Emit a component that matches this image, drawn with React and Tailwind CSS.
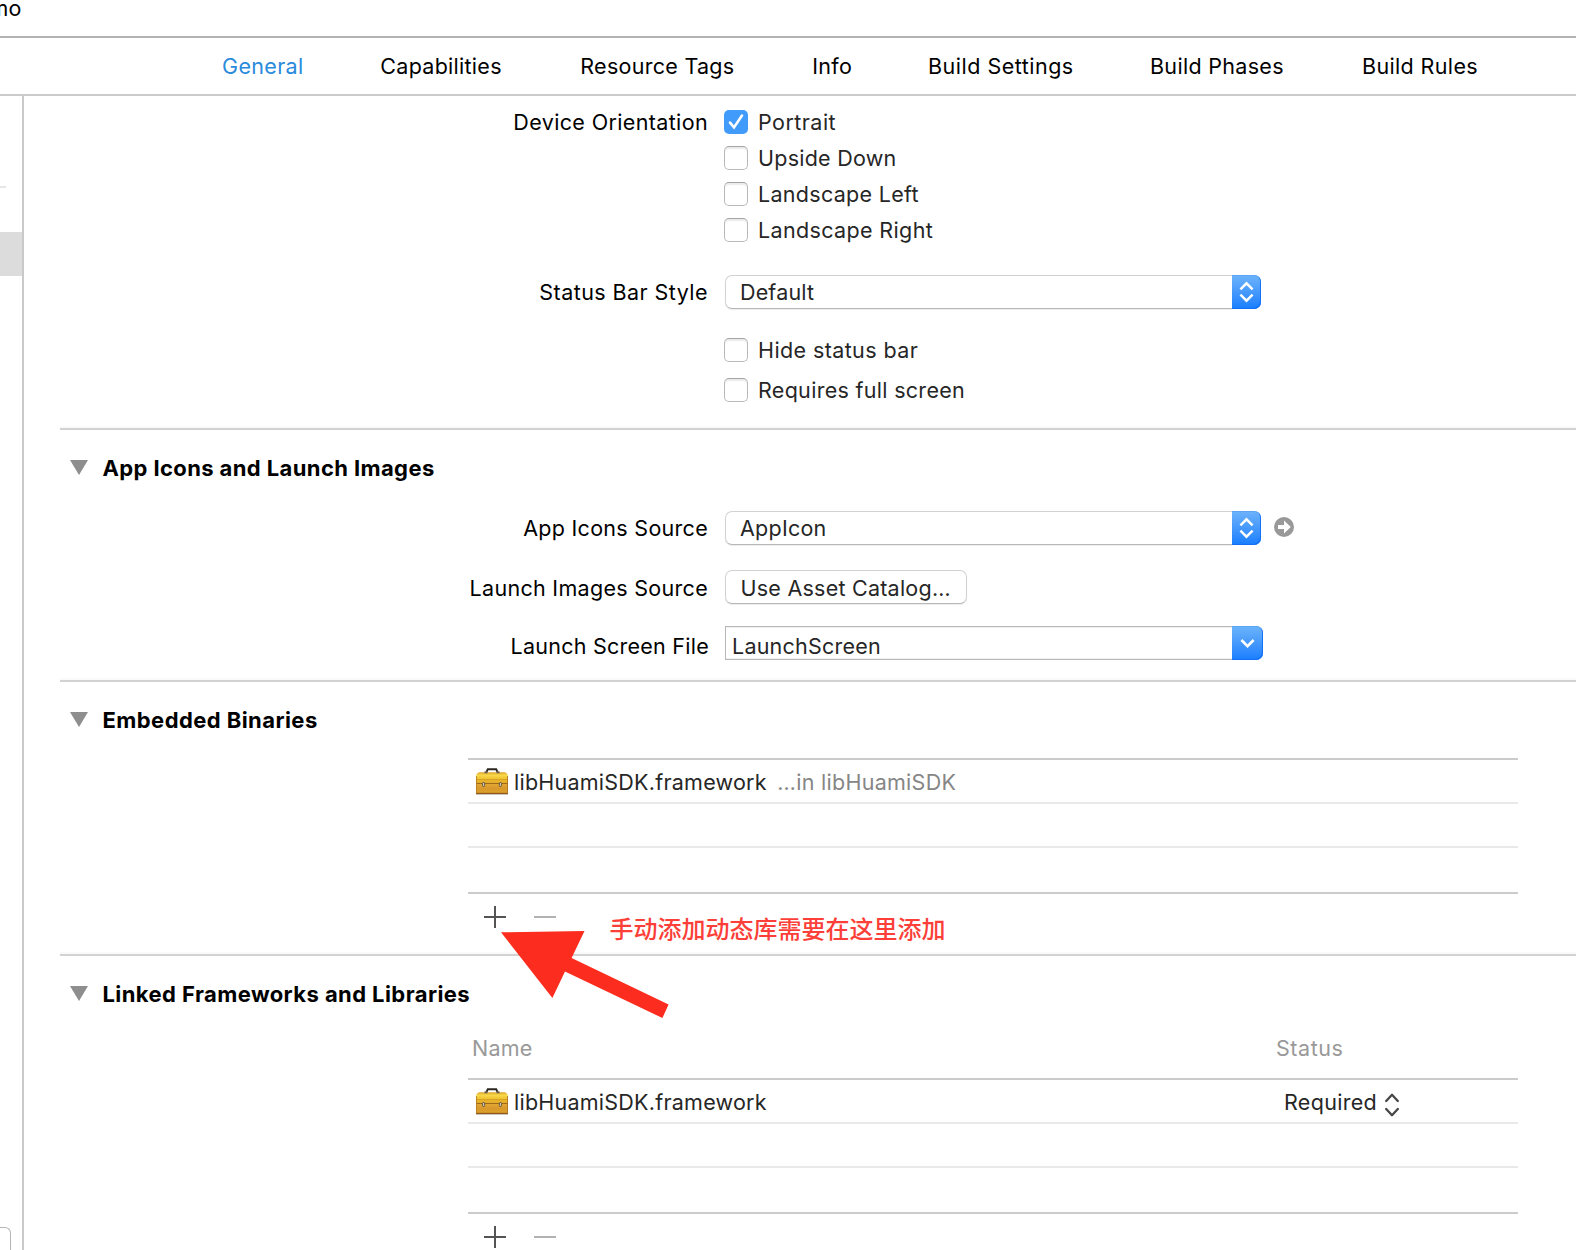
import React from "react";

const TABS = [
  ["General", "tracking-[0.34px] text-[#2a8bdc]"],
  ["Capabilities", "tracking-[0.28px]"],
  ["Resource Tags", "tracking-[0.28px]"],
  ["Info", "tracking-[0.3px]"],
  ["Build Settings", "tracking-[0.5px]"],
  ["Build Phases", "tracking-[0.31px]"],
  ["Build Rules", "tracking-[0.36px]"],
];

function Row({ label, labelClass = "", className = "", children }) {
  return (
    <div className={`flex items-center ${className}`}>
      <div className={`w-[648px] shrink-0 text-right ${labelClass}`}>{label}</div>
      {children}
    </div>
  );
}

function Checkbox({ checked, label, className = "" }) {
  return (
    <label className="ml-4 flex items-center text-[#262626]">
      {checked ? (
        <span className="flex size-6 items-center justify-center rounded-[5px] bg-[#409bfa]">
          <svg width="24" height="24" viewBox="0 0 24 24" fill="none" stroke="#fff" strokeWidth="2.6">
            <path d="M6 12.6 L10 17.4 L18 5.6" strokeLinecap="round" />
          </svg>
        </span>
      ) : (
        <span className="size-6 rounded-[5px] border border-[#b9b9b9] border-t-[#a3a3a3] bg-white shadow-[inset_0_2px_1px_#ececec]" />
      )}
      <span className={`ml-[10px] ${className}`}>{label}</span>
    </label>
  );
}

function Chevrons() {
  return (
    <svg width="29" height="34" viewBox="0 0 29 34" fill="none" stroke="#fff" strokeWidth="2.4">
      <path d="M8.4 14.4 L14.5 8.3 L20.6 14.4" />
      <path d="M8.4 19.6 L14.5 25.7 L20.6 19.6" />
    </svg>
  );
}

function Popup({ value, className = "" }) {
  return (
    <div className="ml-[17px] flex h-[34px] w-[536px] text-[#262626]">
      <div className="flex flex-1 items-center rounded-l-[7px] border border-r-0 border-[#d2d2d2] border-b-[#b8b8b8] bg-white pl-[14px] shadow-[0_1px_1px_#ececec]">
        <span className={className}>{value}</span>
      </div>
      <div className="w-[29px] rounded-r-[7px] bg-linear-to-b from-[#6cb3fa] to-[#157dfe] shadow-[inset_-1px_-1px_0_#1470f4,inset_0_1px_0_#5aa5f3]">
        <Chevrons />
      </div>
    </div>
  );
}

function Heading({ children, className }) {
  return (
    <div className="flex h-[26px] pl-[10px]">
      <svg width="18" height="15" viewBox="0 0 18 15" className="mt-[5px] mr-[14.5px]">
        <path d="M0 0 H18 L9 15 Z" fill="#8e8e8e" />
      </svg>
      <h2 className={`text-[22px] font-bold ${className}`}>{children}</h2>
    </div>
  );
}

function Toolbox() {
  return (
    <svg width="32" height="27" viewBox="0 0 32 27">
      <defs>
        <linearGradient id="lid" x1="0" y1="0" x2="0" y2="1">
          <stop offset="0" stopColor="#dca326" />
          <stop offset="0.25" stopColor="#f8d84a" />
          <stop offset="0.6" stopColor="#efc02c" />
          <stop offset="1" stopColor="#dfa42a" />
        </linearGradient>
        <linearGradient id="body" x1="0" y1="0" x2="0" y2="1">
          <stop offset="0" stopColor="#e2a834" />
          <stop offset="0.5" stopColor="#d8982b" />
          <stop offset="1" stopColor="#dea62c" />
        </linearGradient>
      </defs>
      <path d="M10.5 4 L11.8 1.2 H20.2 L21.5 4" fill="none" stroke="#2b2620" strokeWidth="1.9" />
      <path d="M0 16 V9 Q0 4.3 4.5 4.3 H27.5 Q32 4.3 32 9 V16 Z" fill="url(#lid)" />
      <rect x="8.5" y="3.3" width="3" height="2" fill="#6b6252" />
      <rect x="20.5" y="3.3" width="3" height="2" fill="#6b6252" />
      <rect x="0" y="15.6" width="32" height="10.2" fill="url(#body)" />
      <rect x="0" y="11.2" width="32" height="1" fill="#d49a26" />
      <rect x="0" y="15" width="32" height="1" fill="#9c6a1b" />
      <rect x="0" y="24.8" width="32" height="1.2" fill="#94591a" />
      <rect x="0" y="26" width="32" height="1" fill="#c9c5be" />
      <rect x="0" y="8" width="0.8" height="17.5" fill="#b67a1e" />
      <rect x="31.2" y="8" width="0.8" height="17.5" fill="#a8701c" />
      <rect x="6.6" y="14.4" width="2" height="4.2" rx="1" fill="#d5d5d0" stroke="#4a3f2c" strokeWidth="0.8" />
      <rect x="23.4" y="14.4" width="2" height="4.2" rx="1" fill="#d5d5d0" stroke="#4a3f2c" strokeWidth="0.8" />
    </svg>
  );
}

function FileTable({ origin, status }) {
  return (
    <div className="ml-[408px] w-[1050px] border-y-2 border-[#cbcbcb] text-[#262626]">
      <div className="flex h-11 border-b-2 border-[#e9e9e9] pt-2 pl-2">
        <Toolbox />
        <span className="mt-[1px] ml-[6px] tracking-[0.24px]">libHuamiSDK.framework</span>
        {origin && <span className="mt-[1px] ml-[10.5px] tracking-[0.28px] text-[#868686]">{origin}</span>}
        {status && (
          <span className="mt-[1px] mr-[119px] ml-auto flex">
            <span className="tracking-[0.3px]">{status}</span>
            <svg width="14" height="24" viewBox="0 0 14 24" fill="none" stroke="#474747" strokeWidth="2.3" strokeLinecap="round" strokeLinejoin="round" className="mt-1 ml-2">
              <path d="M1.2 8 L7 1.8 L12.8 8" />
              <path d="M1.2 16 L7 22.2 L12.8 16" />
            </svg>
          </span>
        )}
      </div>
      <div className="h-11 border-b-2 border-[#e9e9e9]" />
      <div className="h-11" />
    </div>
  );
}

function AddRemove() {
  return (
    <>
      <svg width="22" height="22" viewBox="0 0 22 22" className="mt-3 shrink-0">
        <path d="M0 11 H22 M11 0 V22" stroke="#545454" strokeWidth="2" />
      </svg>
      <svg width="22" height="22" viewBox="0 0 22 22" className="mt-3 ml-7 shrink-0">
        <path d="M0 11 H22" stroke="#b2b2b2" strokeWidth="2" />
      </svg>
    </>
  );
}

const SECTION = "border-b-2 border-[#d2d2d2] shadow-[inset_0_-2px_0_#fafafa]";

export default function App() {
  return (
    <div className="flex h-[1250px] w-[1576px] flex-col overflow-hidden bg-white font-[Inter,'Noto_Sans_CJK_SC',sans-serif] text-[21.5px] leading-[26px] whitespace-nowrap text-black">
      <header className="flex h-[38px] shrink-0 border-b-2 border-[#b3b3b3]">
        <span className="-mt-[5px] -ml-[10.5px] tracking-[0.2px]">mo</span>
      </header>
      <nav className="grid h-[58px] shrink-0 grid-cols-[158.3px_200px_232px_115.7px_222px_212px_auto] border-b-2 border-[#cbcbcb] pt-[15px] pl-[222px]">
        {TABS.map(([name, cls]) => (
          <span key={name} className={cls}>{name}</span>
        ))}
      </nav>
      <div className="flex min-h-0 flex-1">
        <aside className="flex w-6 shrink-0 flex-col overflow-hidden border-r-2 border-[#c9c9c9]">
          <div className="mt-[90px] h-[2px] w-[6px] bg-[#e6e6e6]" />
          <div className="mt-11 h-11 bg-[#dcdcdc]" />
          <div className="mt-auto -ml-2 h-[23px] w-[19px] rounded-tr-[6px] border-t border-r border-[#b5b5b5]" />
        </aside>
        <main className="flex-1 pl-9">
          <section className={`${SECTION} pt-2 pb-[26px]`}>
            <Row className="h-9" label="Device Orientation" labelClass="tracking-[0.36px]">
              <Checkbox checked label="Portrait" className="tracking-[0.46px]" />
            </Row>
            <Row className="h-9">
              <Checkbox label="Upside Down" className="tracking-[0.24px]" />
            </Row>
            <Row className="h-9">
              <Checkbox label="Landscape Left" className="tracking-[0.3px]" />
            </Row>
            <Row className="h-9">
              <Checkbox label="Landscape Right" className="tracking-[0.36px]" />
            </Row>
            <Row className="mt-[27px] h-[34px]" label="Status Bar Style" labelClass="tracking-[0.44px]">
              <Popup value="Default" className="tracking-[0.16px]" />
            </Row>
            <Row className="mt-[29px] h-6">
              <Checkbox label="Hide status bar" className="tracking-[0.4px]" />
            </Row>
            <Row className="mt-4 h-6">
              <Checkbox label="Requires full screen" className="tracking-[0.3px]" />
            </Row>
          </section>

          <section className={`${SECTION} pt-[25px] pb-5`}>
            <Heading className="tracking-[0.39px]">App Icons and Launch Images</Heading>
            <Row className="mt-[30px] h-[34px]" label="App Icons Source" labelClass="tracking-[0.29px]">
              <Popup value="AppIcon" className="tracking-[0.25px]" />
              <svg width="20" height="20" viewBox="0 0 20 20" className="mb-[2px] ml-[13px]">
                <circle cx="10" cy="10" r="10" fill="#999" />
                <path d="M4 8 H10 V3.6 L16.8 10 L10 16.4 V12 H4 Z" fill="#fff" />
              </svg>
            </Row>
            <Row className="mt-[25px] h-[34px]" label="Launch Images Source" labelClass="pt-[2px] tracking-[0.3px]">
              <button className="ml-[17px] h-[34px] w-[242px] rounded-[7px] border border-[#d2d2d2] border-b-[#b8b8b8] bg-white pt-[2px] pl-[14.5px] text-left tracking-[0.24px] text-[#262626] shadow-[0_1px_1px_#ececec]">
                Use Asset Catalog…
              </button>
            </Row>
            <Row className="mt-[22px] h-[34px]" label="Launch Screen File" labelClass="pt-[6px] -mr-[1px] w-[649px]! tracking-[0.25px]">
              <div className="ml-[17px] flex h-[34px] w-[538px] text-[#262626]">
                <div className="flex-1 border border-r-0 border-[#b8b8b8] pt-[6px] pl-[6px] tracking-[0.22px] shadow-[inset_0_1px_0_#f0f0f0,inset_0_-1px_0_#f0f0f0]">
                  LaunchScreen
                </div>
                <div className="w-[31px] rounded-r-[7px] bg-linear-to-b from-[#6cb3fa] to-[#157dfe] shadow-[inset_-1px_-1px_0_#1470f4,inset_0_1px_0_#5aa5f3]">
                  <svg width="31" height="34" viewBox="0 0 31 34" fill="none" stroke="#fff" strokeWidth="2.6">
                    <path d="M9.4 14 L15.5 20.1 L21.6 14" />
                  </svg>
                </div>
              </div>
            </Row>
          </section>

          <section className={`${SECTION} pt-[25px]`}>
            <Heading className="tracking-[0.43px]">Embedded Binaries</Heading>
            <div className="h-[25px]" />
            <FileTable origin="…in libHuamiSDK" />
            <div className="relative flex h-[60px] pl-[424px]">
              <AddRemove />
              <p className="mt-[23px] ml-[53.5px] text-[24px] font-medium tracking-[0px] text-[#fc3f39]">手动添加动态库需要在这里添加</p>
              <svg width="170" height="90" viewBox="0 0 170 90" className="absolute top-[36px] left-[440px]">
                <path d="M1 2.3 L84.5 1 L71.6 28 L168.6 74.5 L162.4 88 L65 41.5 L52.4 68 Z" fill="#fc2c1e" />
              </svg>
            </div>
          </section>

          <section className="pt-[25px]">
            <Heading className="tracking-[0.42px]">Linked Frameworks and Libraries</Heading>
            <div className="mt-7 mb-[17px] flex pl-[412px] text-[#999]">
              <span className="w-[804px] tracking-[0.2px]">Name</span>
              <span className="tracking-[0.55px]">Status</span>
            </div>
            <FileTable status="Required" />
            <div className="flex pl-[424px]">
              <AddRemove />
            </div>
          </section>
        </main>
      </div>
    </div>
  );
}
